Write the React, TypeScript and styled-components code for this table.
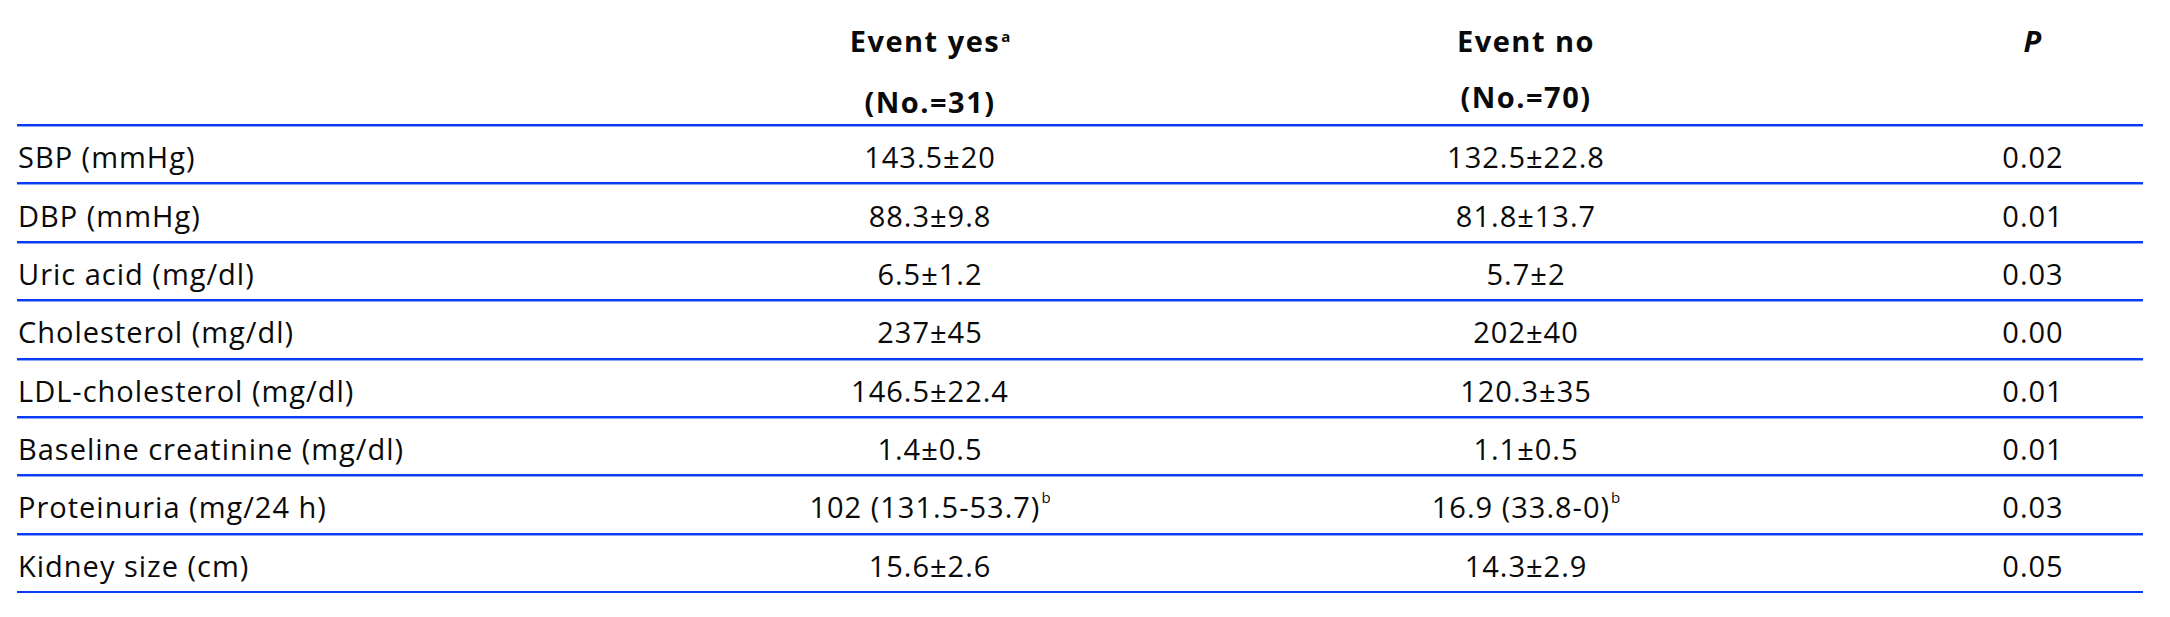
import React from "react";
import styled, { createGlobalStyle } from "styled-components";

const GlobalStyle = createGlobalStyle`
  html, body {
    margin: 0;
    padding: 0;
    background: #ffffff;
  }
  body {
    font-family: "Open Sans", "Noto Sans", "DejaVu Sans", sans-serif;
    color: #0a0a0a;
  }
`;

const RULE = "#0a3cf5";
const RULE_SOFT = "#8aa4f8";
const COLS = "714px 398px 794px 220px";

const Page = styled.div`
  padding-left: 17px;
  width: 2126px;
`;

const Table = styled.div`
  display: flex;
  flex-direction: column;
  font-size: 29px;
  letter-spacing: 1px;
`;

const HeaderRow = styled.div`
  display: grid;
  grid-template-columns: ${COLS};
  height: 126px;
  box-sizing: border-box;
  border-bottom: 2px solid ${RULE};
  box-shadow: 0 1px 0 ${RULE_SOFT};
`;

const HeaderCell = styled.div`
  box-sizing: border-box;
  padding-top: 13px;
  line-height: 56px;
  font-weight: 700;
  letter-spacing: 1.5px;
  text-align: center;
`;

const HeaderLine = styled.div`
  white-space: nowrap;
`;

const PMark = styled.span`
  font-style: italic;
`;

const Row = styled.div`
  display: grid;
  grid-template-columns: ${COLS};
  height: 58.375px;
  box-sizing: border-box;
  border-bottom: 2px solid ${RULE};
  box-shadow: 0 1px 0 ${RULE_SOFT};
`;

const Cell = styled.div<{ $align?: "left" | "center" }>`
  display: flex;
  align-items: center;
  justify-content: ${(p) => (p.$align === "left" ? "flex-start" : "center")};
  box-sizing: border-box;
  padding-top: 5px;
  padding-left: ${(p) => (p.$align === "left" ? "1px" : "0")};
  white-space: nowrap;
  font-weight: 400;
`;

const Sup = styled.sup<{ $bold?: boolean }>`
  font-size: 15px;
  letter-spacing: 0;
  vertical-align: 0;
  position: relative;
  top: -10px;
  margin-left: 1px;
  font-weight: ${(p) => (p.$bold ? 700 : 400)};
`;

type RowData = {
  label: string;
  yes: string;
  no: string;
  p: string;
  sup?: string;
};

const rows: RowData[] = [
  { label: "SBP (mmHg)", yes: "143.5±20", no: "132.5±22.8", p: "0.02" },
  { label: "DBP (mmHg)", yes: "88.3±9.8", no: "81.8±13.7", p: "0.01" },
  { label: "Uric acid (mg/dl)", yes: "6.5±1.2", no: "5.7±2", p: "0.03" },
  { label: "Cholesterol (mg/dl)", yes: "237±45", no: "202±40", p: "0.00" },
  { label: "LDL-cholesterol (mg/dl)", yes: "146.5±22.4", no: "120.3±35", p: "0.01" },
  { label: "Baseline creatinine (mg/dl)", yes: "1.4±0.5", no: "1.1±0.5", p: "0.01" },
  { label: "Proteinuria (mg/24 h)", yes: "102 (131.5-53.7)", no: "16.9 (33.8-0)", p: "0.03", sup: "b" },
  { label: "Kidney size (cm)", yes: "15.6±2.6", no: "14.3±2.9", p: "0.05" },
];

export default function App() {
  return (
    <>
      <GlobalStyle />
      <Page>
        <Table>
          <HeaderRow>
            <HeaderCell />
            <HeaderCell>
              <HeaderLine>
                Event yes<Sup $bold>a</Sup>
              </HeaderLine>
              <HeaderLine>(No.=31)</HeaderLine>
            </HeaderCell>
            <HeaderCell>
              <HeaderLine>Event no</HeaderLine>
              <HeaderLine>(No.=70)</HeaderLine>
            </HeaderCell>
            <HeaderCell>
              <HeaderLine>
                <PMark>P</PMark>
              </HeaderLine>
            </HeaderCell>
          </HeaderRow>
          {rows.map((r) => (
            <Row key={r.label}>
              <Cell $align="left">{r.label}</Cell>
              <Cell>
                {r.yes}
                {r.sup && <Sup>{r.sup}</Sup>}
              </Cell>
              <Cell>
                {r.no}
                {r.sup && <Sup>{r.sup}</Sup>}
              </Cell>
              <Cell>{r.p}</Cell>
            </Row>
          ))}
        </Table>
      </Page>
    </>
  );
}
